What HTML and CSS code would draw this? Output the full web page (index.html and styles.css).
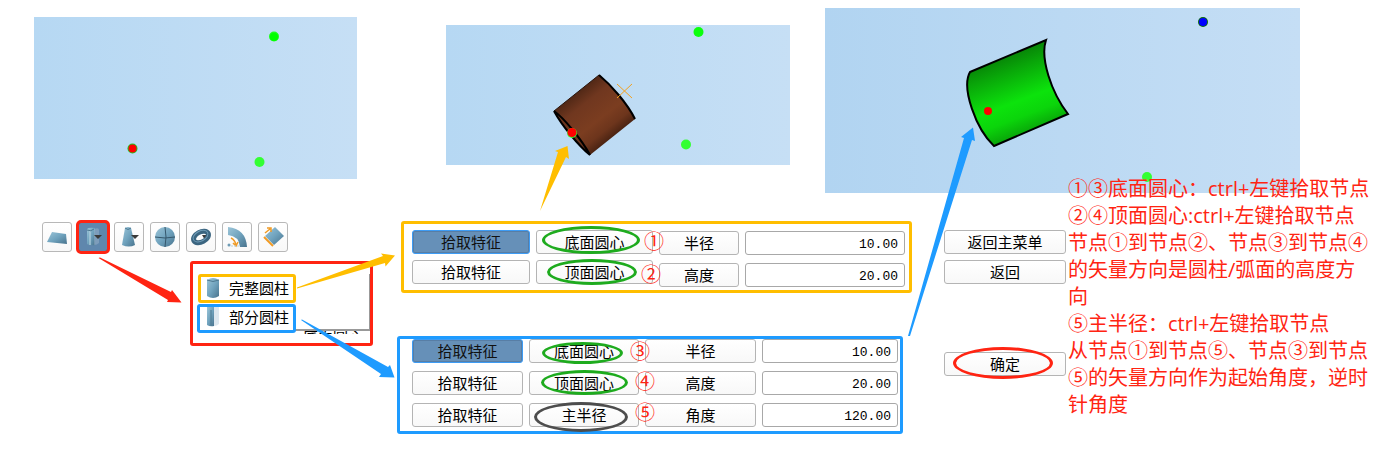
FILE: index.html
```
<!DOCTYPE html>
<html lang="zh-CN">
<head>
<meta charset="utf-8">
<title>圆柱拾取</title>
<link rel="stylesheet" href="styles.css">
</head>
<body>
<main class="page">
  <section class="views">
    <svg class="view view-a" viewBox="0 0 323 162" preserveAspectRatio="none" role="img" aria-label="节点">
      <circle cx="240" cy="19.500" r="5" fill="#1cff1c"/><circle cx="240" cy="20" r="4" fill="#00ff00"/>
      <circle cx="98.500" cy="131.500" r="5" fill="#22c322"/><circle cx="98.500" cy="131.500" r="4" fill="#ff0000"/>
      <circle cx="225.500" cy="145" r="5" fill="#33ff33"/>
    </svg>
    <svg class="view view-b" viewBox="0 0 344 140" preserveAspectRatio="none" role="img" aria-label="完整圆柱">
      <defs>
        <linearGradient id="brown" gradientUnits="userSpaceOnUse" x1="130" y1="66" x2="168" y2="114">
          <stop offset="0" stop-color="#4d2615"/><stop offset=".25" stop-color="#70371f"/><stop offset=".6" stop-color="#7b3d20"/><stop offset=".8" stop-color="#6d351c"/><stop offset="1" stop-color="#421f10"/>
        </linearGradient>
      </defs>
      <path d="M108 86 L153 50 C165 60 181 78 189 94 L144 130 C132 120 117 102 108 86Z" fill="url(#brown)"/>
      <path d="M108 86 L153 50" stroke="#29140b" fill="none"/>
      <path d="M153 50 C165 60 181 78 189 94" stroke="#000" stroke-width="2" fill="none"/>
      <path d="M108 86 C118 93 136 115 144 130 C133 121 116 101 108 86Z" stroke="#000" stroke-width="2" fill="#6b351d"/>
      <path d="M171 59 L186 73 M186 59 L171 73" stroke="#f4a11f" fill="none"/>
      <circle cx="126" cy="108" r="5" fill="#33ff33"/><circle cx="126" cy="107.500" r="4.500" fill="#ff0000"/>
      <circle cx="252.500" cy="7" r="5" fill="#0cff0c"/><circle cx="240" cy="119.500" r="5" fill="#33ff33"/>
    </svg>
    <svg class="view view-c" viewBox="0 0 475 185" preserveAspectRatio="none" role="img" aria-label="部分圆柱">
      <defs>
        <linearGradient id="green" gradientUnits="userSpaceOnUse" x1="178" y1="48" x2="206" y2="122">
          <stop offset="0" stop-color="#078407"/><stop offset=".2" stop-color="#09a509"/><stop offset=".6" stop-color="#0ce30c"/><stop offset=".8" stop-color="#0bd50b"/><stop offset="1" stop-color="#09a909"/>
        </linearGradient>
      </defs>
      <path d="M145 64 L221 32 C215 50 226 84 243 106 L169 138 C151 121 136 80 145 64Z" fill="url(#green)" stroke="#000" stroke-width="2"/>
      <circle cx="163" cy="103" r="4" fill="#ff0000"/>
      <circle cx="378" cy="14" r="5" fill="#0a690a"/><circle cx="378" cy="14" r="4" fill="#0000ff"/>
      <circle cx="322" cy="169" r="5" fill="#33ff33"/>
    </svg>
  </section>

  <section class="work">
    <div class="tools">
      <div class="toolbar" role="toolbar">
        <button class="tool" aria-label="平面"><svg viewBox="0 0 28 28"><path d="M4 19 L9 9 L23 11 L24 21Z" fill="url(#steel)"/></svg></button>
        <button class="tool tool-on" aria-label="圆柱"><svg viewBox="0 0 28 28"><path d="M8 6 Q10 4 16 5 V22 Q11 23 8 21Z" fill="url(#steel)"/><path d="M11 8 V22" stroke="#b6d3e0" stroke-width="2" opacity=".6"/><path d="M8 7 Q12 9 15 6" stroke="#4d7890" fill="none"/><path d="M15 6 Q20 4 20 7 V20 Q18 22 15 22Z" fill="#a9bfd0" opacity=".4"/><path d="M15 12 H23 L19 16Z" fill="#3a3a3a"/></svg></button>
        <button class="tool" aria-label="圆锥"><svg viewBox="0 0 28 28"><path d="M10 5 Q13 3 16 5 L20 22 Q14 25 7 22Z" fill="url(#steel)"/><path d="M10 5 Q13 8 16 5" stroke="#4d7890" fill="none"/><path d="M16 12 H24 L20 16Z" fill="#3a3a3a"/></svg></button>
        <button class="tool" aria-label="球"><svg viewBox="0 0 28 28"><circle cx="14" cy="14" r="10" fill="url(#steel)"/><path d="M4 14 Q14 16 24 14 M14 4 Q16 14 14 24" stroke="#35576c" fill="none"/></svg></button>
        <button class="tool" aria-label="圆环"><svg viewBox="0 0 28 28"><path d="M15 12 H22 L18 17Z" fill="#3a3a3a"/><ellipse cx="14" cy="14" rx="8" ry="5" transform="rotate(-28 14 14)" fill="none" stroke="#3b6580" stroke-width="5"/><ellipse cx="14" cy="13" rx="8" ry="5" transform="rotate(-28 14 14)" fill="none" stroke="#6f9bb5"/></svg></button>
        <button class="tool" aria-label="弧面"><svg viewBox="0 0 28 28"><path d="M5 4 Q23 6 24 24 H17 Q16 13 5 12Z" fill="url(#steel)"/><path d="M8 15 Q12 17 13 22 M10 20 L13 23 L15 19" stroke="#f09a24" stroke-width="1.500" fill="none"/><path d="M8 23 H16" stroke="#b8d0e0" stroke-dasharray="2 1"/><circle cx="6" cy="22" r="1.500" fill="#6f9bb5"/></svg></button>
        <button class="tool" aria-label="旋转"><svg viewBox="0 0 28 28"><path d="M6 13 L16 4 L25 13 L15 22Z" fill="url(#steel)"/><path d="M5 14 L14 23" stroke="#f09a24" stroke-width="2"/><path d="M6 10 L11 6 M8 5 H12 V9" stroke="#f09a24" stroke-width="1.500" fill="none"/></svg></button>
      </div>
      <div class="menu-frame">
        <div class="menu" role="menu">
          <button class="menu-item menu-full" role="menuitem"><svg viewBox="0 0 14 22"><path d="M1 3 Q7 -1 13 3 V19 Q7 23 1 19Z" fill="url(#steel)"/><path d="M1 3 Q7 6 13 3" stroke="#4d7890" fill="none"/></svg>完整圆柱</button>
          <button class="menu-item menu-part" role="menuitem"><svg viewBox="0 0 14 22"><path d="M1 1 H8 V20 Q4 21 1 19Z" fill="url(#steel)"/><path d="M5 4 V20" stroke="#4d7890"/><path d="M8 1 H13 V18 Q11 20 8 20Z" fill="#dce7ef"/></svg>部分圆柱</button>
        </div>
        <div class="behind" aria-hidden="true">底面圆心</div>
      </div>
    </div>

    <div class="panels">
      <form class="panel panel-full">
        <div class="picks">
          <button type="button" class="btn btn-on">拾取特征</button>
          <button type="button" class="btn">底面圆心<span class="ring ring-1"></span><span class="num num-1">①</span></button>
          <button type="button" class="btn">拾取特征</button>
          <button type="button" class="btn">顶面圆心<span class="ring ring-2"></span><span class="num num-2">②</span></button>
        </div>
        <div class="values">
          <label class="btn" for="r1">半径</label><input class="field" id="r1" value="10.00">
          <label class="btn" for="h1">高度</label><input class="field" id="h1" value="20.00">
        </div>
      </form>
      <form class="panel panel-part">
        <button type="button" class="btn btn-on">拾取特征</button>
        <button type="button" class="btn">底面圆心<span class="ring ring-3"></span><span class="num num-3">③</span></button>
        <label class="btn" for="r2">半径</label><input class="field" id="r2" value="10.00">
        <button type="button" class="btn">拾取特征</button>
        <button type="button" class="btn">顶面圆心<span class="ring ring-4"></span><span class="num num-4">④</span></button>
        <label class="btn" for="h2">高度</label><input class="field" id="h2" value="20.00">
        <button type="button" class="btn">拾取特征</button>
        <button type="button" class="btn">主半径<span class="ring ring-5"></span><span class="num num-5">⑤</span></button>
        <label class="btn" for="a2">角度</label><input class="field" id="a2" value="120.00">
      </form>
    </div>

    <div class="actions">
      <button class="btn">返回主菜单</button>
      <button class="btn">返回</button>
      <button class="btn confirm">确定<span class="ring ring-ok"></span></button>
    </div>

    <div class="notes">
      <p>①③底面圆心：ctrl+左键拾取节点</p>
      <p>②④顶面圆心:ctrl+左键拾取节点</p>
      <p>节点①到节点②、节点③到节点④的矢量方向是圆柱/弧面的高度方向</p>
      <p>⑤主半径：ctrl+左键拾取节点</p>
      <p>从节点①到节点⑤、节点③到节点⑤的矢量方向作为起始角度，逆时针角度</p>
    </div>
  </section>

  <svg class="arrows" viewBox="0 0 1382 449" preserveAspectRatio="none" aria-hidden="true">
    <defs>
      <linearGradient id="steel" x1="0" y1="0" x2="1" y2="1">
        <stop offset="0" stop-color="#9cc5d8"/><stop offset=".5" stop-color="#70a3be"/><stop offset="1" stop-color="#48738d"/>
      </linearGradient>
    </defs>
    <path d="M98.500 258 L100 257.500 L171 292 L172 290 L181.500 302.500 L167 302 L168 300Z" fill="#ff2412"/>
    <path d="M297 288.500 L297 287.500 L383 256 L381 253.500 L395 255.500 L385.500 266.500 L385 263Z" fill="#ffbe00"/>
    <path d="M301 320 L302 319.500 L388 367 L390 365 L394.500 377.500 L379 377 L381 374Z" fill="#1e9bff"/>
    <path d="M540 211 L558 152 L555 151 L567.500 146 L569 159 L566 157Z" fill="#ffbe00"/>
    <path d="M908 336 L964 138 L961 137 L973 127.500 L975 141 L972 140 L910 336Z" fill="#1e9bff"/>
  </svg>
</main>
</body>
</html>
```
FILE: styles.css
```
* { box-sizing: border-box; }

body {
  margin: 0;
  background: #fff;
  color: #000;
  font: 15px/20px "Noto Sans CJK SC", sans-serif;
}

button, input { font: inherit; color: inherit; }

.page {
  position: relative;
  padding: 8px 0 15px;
}

.views {
  display: flex;
  align-items: flex-start;
  padding: 0 82px 0 34px;
}

.view {
  display: block;
  min-width: 0;
  background: linear-gradient(90deg, #b6d8f3, #c6dff5);
}

.view-a { flex: 323 1 0; height: 162px; margin: 9px 89px 0 0; }
.view-b { flex: 344 1 0; height: 140px; margin: 17px 35px 0 0; }
.view-c { flex: 475 1 0; height: 185px; background: linear-gradient(90deg, #b1d4f1, #c5def5); }

.work {
  display: grid;
  grid-template-columns: 355fr 547fr 124fr 306fr;
  align-items: start;
  padding: 27px 8px 0 42px;
}

.toolbar {
  display: flex;
  gap: 6px;
  padding-top: 2px;
}

.tool {
  width: 30px;
  height: 30px;
  padding: 0;
  border: 1px solid #b8b8b8;
  border-radius: 3px;
  background: linear-gradient(#fff, #f8f8f8);
}

.tool svg { display: block; width: 28px; height: 28px; }

.tool-on {
  border-color: #4b6a88;
  background: #5f87ad;
  outline: 3px solid #ff2412;
  outline-offset: -1px;
}

.menu-frame {
  width: 183px;
  height: 85px;
  margin: 9px 0 0 148px;
  padding: 10px 0 0 4px;
  border: 3px solid #ff2412;
  border-radius: 3px;
}

.menu {
  display: flex;
  flex-direction: column;
  align-items: flex-start;
  gap: 1px;
  height: 57px;
  border: solid #999;
  border-width: 0 1px 2px 0;
}

.menu-item {
  display: flex;
  flex: none;
  align-items: center;
  gap: 9px;
  height: 29px;
  padding: 0 4px 2px 5px;
  border: 3px solid;
  border-radius: 3px;
  background: #fff;
  color: #000;
}

.menu-item svg { width: 14px; height: 22px; }
.menu-full { margin-left: 1px; border-color: #ffbe00; }
.menu-part { padding: 0 4px 4px 6px; border-color: #1e9bff; }

.behind {
  height: 3px;
  margin-left: 106px;
  overflow: hidden;
  line-height: 10px;
}

.panel {
  border: 3px solid;
  border-radius: 3px;
}

.panel-full {
  display: grid;
  grid-template-columns: 241fr 246fr;
  gap: 6px;
  height: 72px;
  margin: 1px 32px 0 4px;
  padding: 6px 4px 0 8px;
  border-color: #ffbe00;
}

.picks {
  display: grid;
  grid-template-columns: 118fr 117fr;
  align-content: start;
  gap: 6px;
}

.values {
  display: grid;
  grid-template-columns: 80fr 160fr;
  align-content: start;
  gap: 8px 6px;
  padding-top: 1px;
}

.panel-part {
  display: grid;
  grid-template-columns: 111fr 110fr 111fr 136fr;
  align-content: start;
  gap: 8px 6px;
  height: 98px;
  margin: 43px 41px 0 0;
  padding: 0 2px 0 12px;
  border-color: #1e9bff;
}

.btn {
  position: relative;
  display: flex;
  align-items: center;
  justify-content: center;
  min-width: 0;
  height: 24px;
  padding: 0;
  border: 1px solid #b4b4b4;
  border-radius: 3px;
  background: linear-gradient(#fff, #f8f8f8);
  white-space: nowrap;
}

.btn-on {
  border-color: #3d9cf5;
  background: #6690b8;
  box-shadow: inset 0 0 0 1px #587ea5;
  color: #111;
}

.field {
  width: 100%;
  min-width: 0;
  height: 24px;
  padding: 2px 6px 0;
  border: 1px solid #a8a8a8;
  border-radius: 3px;
  background: #fff;
  font: 13px/20px "Liberation Mono", monospace;
  text-align: right;
}

/* Hand-drawn marks laid over the buttons */
.ring {
  position: absolute;
  border: 3px solid #1eab1e;
  border-radius: 50%;
}

.ring-1 { left: 5px; top: -5px; width: 98px; height: 28px; }
.ring-2 { left: 10px; top: -2px; width: 90px; height: 26px; }
.ring-3 { left: 12px; top: 2px; width: 81px; height: 22px; }
.ring-4 { left: 11px; top: -2px; width: 87px; height: 25px; }
.ring-5 { left: 4px; top: -2px; width: 94px; height: 30px; border-color: #4d4d4d; }
.ring-ok { left: 8px; top: -6px; width: 100px; height: 32px; border-color: #ff2412; }

.num {
  position: absolute;
  z-index: 1;
  color: #ff2412;
  font-size: 20px;
  line-height: 20px;
}

.num-1 { left: 107px; top: 0; }
.num-2 { left: 104px; top: 3px; }
.num-3 { left: 100px; top: 1px; }
.num-4 { left: 105px; top: -1px; }
.num-5 { left: 105px; top: -2px; }

.actions {
  display: flex;
  flex-direction: column;
  gap: 6px;
  padding: 10px 2px 0 0;
}

.confirm { margin-top: 62px; }

.notes {
  margin-top: -45px;
  color: #ff2412;
  font: 20px/27px "Open Sans", "Noto Sans CJK SC", sans-serif;
}

.notes p { margin: 0; }

.arrows {
  position: absolute;
  inset: 0;
  width: 100%;
  height: 100%;
  pointer-events: none;
}
```
